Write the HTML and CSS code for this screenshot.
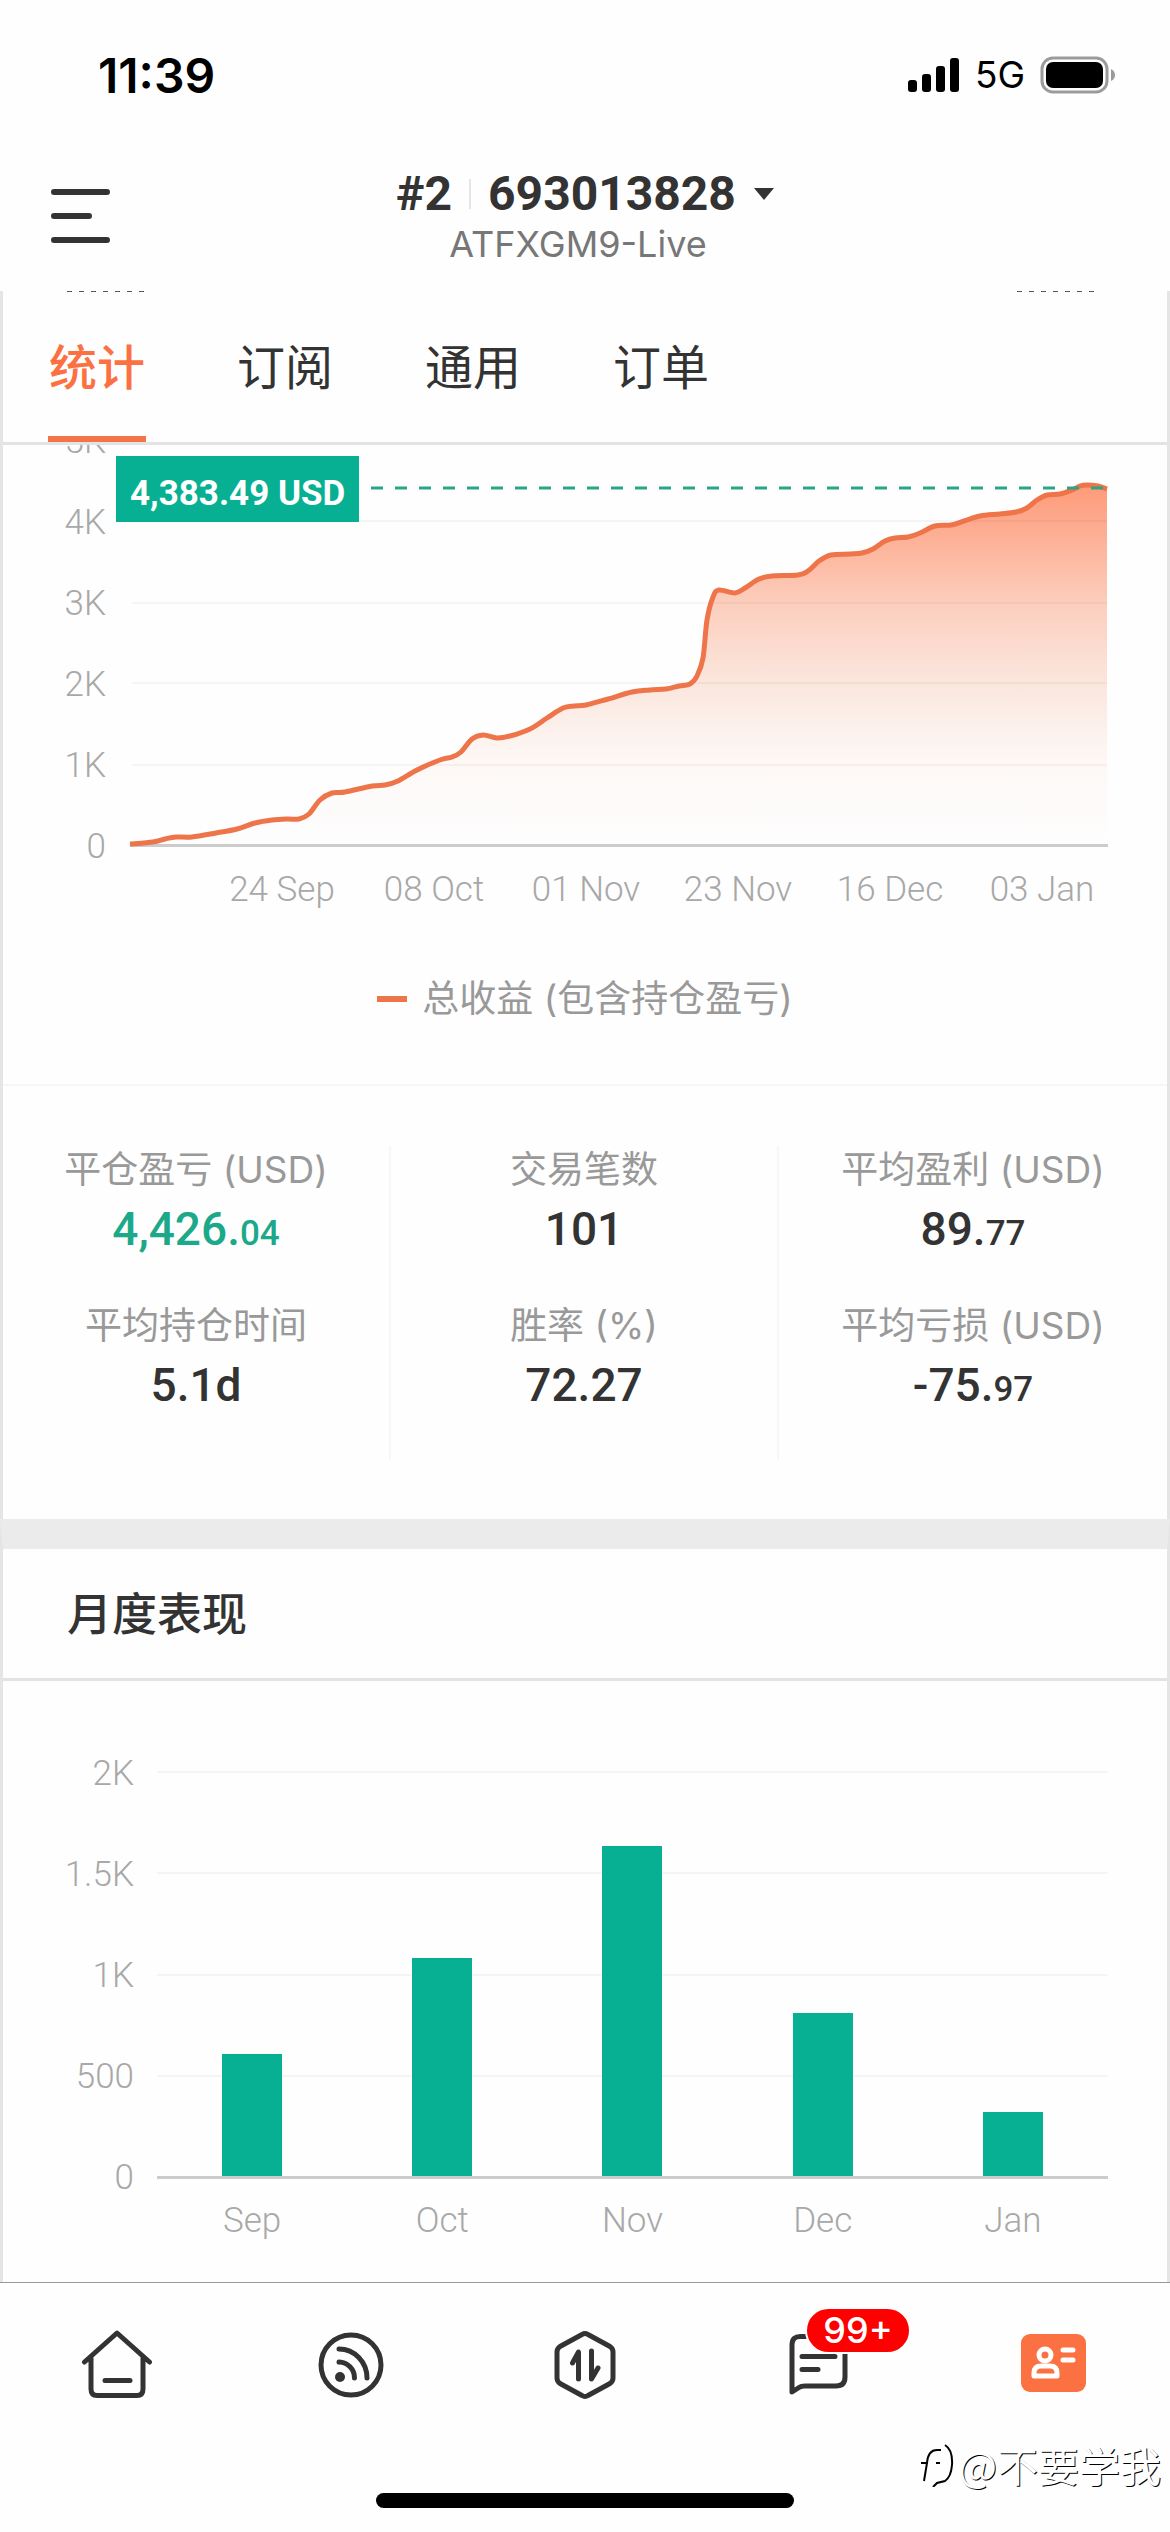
FILE: index.html
```html
<!DOCTYPE html>
<html lang="zh-CN">
<head>
<meta charset="utf-8">
<meta name="viewport" content="width=device-width, initial-scale=1">
<title>ATFXGM9-Live</title>
<link rel="stylesheet" href="styles.css">
</head>
<body>
<div class="status">
  <span class="clock">11:39</span>
  <div class="status-right">
    <svg class="signal" width="52" height="36" viewBox="0 0 52 36"><rect x="0" y="23" width="9" height="12" rx="3"/><rect x="14" y="17" width="9" height="18" rx="3"/><rect x="28" y="9" width="9" height="26" rx="3"/><rect x="42" y="1" width="9" height="34" rx="3"/></svg>
    <span class="network">5G</span>
    <svg class="battery" width="76" height="38" viewBox="0 0 76 38"><rect x="2" y="2" width="65" height="34" rx="11" fill="none" stroke="#9b9b9b" stroke-width="3"/><rect x="6" y="6" width="57" height="26" rx="7"/><path d="M71 13q4 2 4 6t-4 6z" fill="#9b9b9b"/></svg>
  </div>
</div>
<header class="header">
  <button class="menu" aria-label="菜单"><svg width="62" height="56" viewBox="0 0 62 56" stroke="#333" stroke-width="6" stroke-linecap="round"><path d="M4 4H57M4 28H39M4 52H57"/></svg></button>
  <button class="account">
    <span class="account-top"><span>#2</span><i class="bar"></i><span>693013828</span><svg class="caret" width="20" height="12" viewBox="0 0 20 12"><path d="M0 0H20L10 12z" fill="#333"/></svg></span>
    <span class="server">ATFXGM9-Live</span>
  </button>
</header>
<main class="content">
  <div class="scrolled-edge"><i></i><i></i></div>
  <nav class="tabs">
    <a class="tab active" href="#stats">统计</a>
    <a class="tab" href="#subscribe">订阅</a>
    <a class="tab" href="#general">通用</a>
    <a class="tab" href="#orders">订单</a>
  </nav>
  <section class="profit" id="stats">
    <div class="profit-chart">
      <div class="y-axis"><span>5K</span><span>4K</span><span>3K</span><span>2K</span><span>1K</span><span>0</span></div>
      <svg class="profit-plot" viewBox="130 40 978 408" preserveAspectRatio="none">
        <defs><linearGradient id="fade" gradientUnits="userSpaceOnUse" x1="0" y1="85" x2="0" y2="445">
          <stop offset="0" stop-color="#fe9b79"/><stop offset=".12" stop-color="#fdac91"/><stop offset=".33" stop-color="#fccebd"/><stop offset=".55" stop-color="#fbe6dd"/><stop offset=".77" stop-color="#fdf8f6"/><stop offset="1" stop-color="#fefefe"/>
        </linearGradient></defs>
        <path id="area" fill="url(#fade)"/>
        <path d="M132 121H1107M132 203H1107M132 283H1107M132 365H1107" stroke="#000" stroke-opacity=".035" stroke-width="2"/>
        <path d="M130 445.500H1108" stroke="#ccc" stroke-width="3"/>
        <path id="line" fill="none" stroke="#ee7449" stroke-width="5" stroke-linejoin="round"/>
        <path d="M371 88H1107" stroke="#2ba487" stroke-width="3" stroke-dasharray="12 12"/>
      </svg>
      <div class="tooltip">4,383.49 USD</div>
    </div>
    <div class="dates"><span>24 Sep</span><span>08 Oct</span><span>01 Nov</span><span>23 Nov</span><span>16 Dec</span><span>03 Jan</span></div>
    <div class="legend"><i></i>总收益 (包含持仓盈亏)</div>
  </section>
  <section class="stats">
    <div class="stat-col">
      <div class="stat"><span class="label">平仓盈亏 (USD)</span><span class="value gain">4,426.<small>04</small></span></div>
      <div class="stat"><span class="label">平均持仓时间</span><span class="value">5.1d</span></div>
    </div>
    <div class="stat-col">
      <div class="stat"><span class="label">交易笔数</span><span class="value">101</span></div>
      <div class="stat"><span class="label">胜率 (%)</span><span class="value">72.27</span></div>
    </div>
    <div class="stat-col">
      <div class="stat"><span class="label">平均盈利 (USD)</span><span class="value">89.<small>77</small></span></div>
      <div class="stat"><span class="label">平均亏损 (USD)</span><span class="value">-75.<small>97</small></span></div>
    </div>
  </section>
  <section class="monthly">
    <h2>月度表现</h2>
    <div class="month-chart">
      <div class="y-axis"><span>2K</span><span>1.5K</span><span>1K</span><span>500</span><span>0</span></div>
      <div class="bars">
        <div class="rules"><i></i><i></i><i></i><i></i></div>
        <div class="col" style="height:122px"></div>
        <div class="col" style="height:218px"></div>
        <div class="col" style="height:330px"></div>
        <div class="col" style="height:163px"></div>
        <div class="col" style="height:64px"></div>
      </div>
    </div>
    <div class="months"><span>Sep</span><span>Oct</span><span>Nov</span><span>Dec</span><span>Jan</span></div>
  </section>
</main>
<nav class="tabbar">
  <a href="#home" aria-label="首页"><svg width="72" height="72" viewBox="0 0 72 72"><path d="M3.500 33L36 4L68.500 33M10 29V60Q10 66.500 16 66.500H56Q62 66.500 62 60V29M24 51.500H49"/></svg></a>
  <a href="#signals" aria-label="信号"><svg width="72" height="72" viewBox="0 0 72 72"><ellipse cx="36" cy="36" rx="30" ry="30"/><path d="M24 20A28 29 0 0 1 52 49M24 33A16 16 0 0 1 39.500 49"/><circle cx="25" cy="48" r="5" class="dot"/></svg></a>
  <a href="#trade" aria-label="交易"><svg width="72" height="72" viewBox="0 0 72 72"><path d="M33 5.500Q36 3.500 39 5.500L61 17.500Q64 19.500 64 23V49Q64 52.500 61 54.500L39 66.500Q36 68.500 33 66.500L11 54.500Q8 52.500 8 49V23Q8 19.500 11 17.500ZM23.500 34L29.500 23V50M42.500 22V50L49 39"/></svg></a>
  <a class="messages" href="#messages" aria-label="消息"><svg width="72" height="72" viewBox="0 0 72 72"><path d="M18 7.500Q9 7 9 16V63L16 58.500Q18 57 22 57H53Q62 57 62 48V16Q62 7.500 53 7.500ZM19 27.500H52M19 40.500H35"/></svg><b class="badge">99+</b></a>
  <a href="#me" aria-label="账户"><svg width="72" height="72" viewBox="0 0 72 72"><rect x="4" y="5" width="65" height="58" rx="9" fill="#fc7141" stroke="none"/><g stroke="#fff"><circle cx="28" cy="26" r="6"/><path d="M17 47V44Q17 37 24 37H33Q40 37 40 44V47Z"/><path d="M46 21H56M46 31H56"/></g></svg></a>
</nav>
<footer class="home-area"><i class="home-indicator"></i></footer>
<div class="watermark"><svg width="38" height="46" viewBox="0 0 38 46" fill="none" stroke="#000" stroke-width="2"><path d="M6 40L9 22H3M9 22Q10 9 19 9H23M18 22H22M27 4Q35 9 34 24Q33 36 27 40L19 42L15 46"/></svg><span>@不要学我</span></div>
<script src="chart.js"></script>
</body>
</html>
```
FILE: styles.css
```css
* { box-sizing: border-box; }
body { margin: 0; background: #fefefe; color: #333; font-family: Inter, "Noto Sans CJK SC", sans-serif; font-size: 36px; position: relative; }
button { border: 0; padding: 0; background: none; color: inherit; font: inherit; }
a { color: inherit; text-decoration: none; }
svg { display: block; }
.status { height: 150px; padding: 0 54px 0 98px; display: flex; justify-content: space-between; align-items: center; color: #000; }
.clock { font-size: 48px; font-weight: 600; }
.status-right { display: flex; align-items: center; gap: 15px; }
.network { font-size: 37px; line-height: 40px; }
.header { height: 141px; display: grid; grid-template-columns: 1fr auto 1fr; align-items: start; }
.menu { margin: 38px 0 0 50px; justify-self: start; }
.account { display: flex; flex-direction: column; align-items: center; padding-top: 15px; }
.account-top { display: flex; align-items: center; font: 700 48px/58px Roboto, sans-serif; }
.bar { width: 2px; height: 30px; margin: 0 17px; background: #e5e5e5; }
.caret { margin-left: 18px; }
.server { line-height: 42px; color: #777; margin-right: 14px; }
.content { border: solid #e5e5e5; border-width: 0 3px; }
.scrolled-edge { height: 1px; padding: 0 70px 0 64px; display: flex; justify-content: space-between; }
.scrolled-edge i { width: 80px; height: 1px; background: repeating-linear-gradient(90deg, #555 0 5px, transparent 5px 12px); }
.tabs { height: 153px; display: flex; gap: 90px; padding-left: 45px; border-bottom: 3px solid #e3e3e3; }
.tab { display: block; padding: 0 1px; font-size: 48px; line-height: 152px; }
.tab.active { height: 150px; color: #fc7141; font-weight: 500; border-bottom: 6px solid #f4744a; }
.profit { overflow: hidden; height: 641px; border-bottom: 2px solid #f6f6f6; }
.y-axis { display: flex; flex-direction: column; text-align: right; padding-right: 24px; }
.y-axis, .dates, .months { font-family: Roboto, sans-serif; font-weight: 300; font-size: 35px; color: #a8a8a8; }
.profit-chart { display: grid; grid-template-columns: 127px 1fr; margin-top: -45px; padding-right: 59px; position: relative; }
.profit-chart .y-axis span { height: 81px; line-height: 84px; }
.profit-plot { width: 100%; height: 408px; margin-top: 40px; }
.tooltip { position: absolute; left: 113px; top: 56px; height: 66px; padding: 5px 14px 0; background: #07b092; color: #fff; font: 700 35px/66px Roboto, sans-serif; }
.dates { display: grid; grid-template-columns: repeat(6, 1fr); padding: 0 49px 0 203px; margin-top: -18px; line-height: 44px; text-align: center; }
.legend { display: flex; justify-content: center; align-items: center; gap: 15px; margin-top: 61px; color: #999; font-size: 37px; line-height: 52px; }
.legend i { width: 30px; height: 6px; background: #ee7449; }
.stats { display: grid; grid-template-columns: repeat(3, 1fr); padding: 60px 0; }
.stat-col { height: 313px; border-right: 2px solid #f7f7f7; text-align: center; }
.stat-col:last-child { border-right: 0; }
.stat { display: flex; flex-direction: column; height: 156px; }
.label { color: #999; font-size: 37px; line-height: 48px; }
.value { font: 500 46px/68px Roboto, sans-serif; margin-top: 1px; }
.value small { font-size: 35px; }
.gain { color: #1ba98a; }
.monthly { border-top: 30px solid #ebebeb; margin: 0 -3px; padding: 0; height: 763px; border-left: 3px solid #e5e5e5; border-right: 3px solid #e5e5e5; }
h2 { margin: 0; padding-left: 64px; height: 132px; font-size: 45px; line-height: 132px; font-weight: 500; border-bottom: 3px solid #e3e3e3; }
.month-chart { display: grid; grid-template-columns: 154px 1fr; margin-top: 41px; padding-right: 59px; }
.month-chart .y-axis { padding-right: 23px; }
.month-chart .y-axis span { height: 101px; line-height: 104px; }
.bars { position: relative; height: 408px; margin-top: 49px; display: flex; justify-content: space-around; align-items: flex-end; border-bottom: 3px solid #ccc; }
.rules { position: absolute; inset: 0; display: grid; grid-template-rows: repeat(4, 1fr); }
.rules i { border-top: 2px solid #f5f5f5; }
.col { width: 60px; background: #07b092; position: relative; }
.months { display: grid; grid-template-columns: repeat(5, 1fr); padding: 0 59px 0 154px; margin-top: -28px; line-height: 44px; text-align: center; }
.tabbar { border-top: 1px solid #999; display: grid; grid-template-columns: repeat(5, 1fr); justify-items: center; padding-top: 46px; height: 160px; }
.tabbar svg { fill: none; stroke: #333; stroke-width: 5; stroke-linecap: round; stroke-linejoin: round; }
.tabbar .dot { fill: #333; stroke: none; }
.messages { position: relative; }
.badge { position: absolute; left: 22px; top: -22px; width: 106px; height: 47px; border: 2px solid #fefefe; border-radius: 24px; background: #f00; color: #fff; font-size: 36px; font-weight: 500; line-height: 43px; text-align: center; }
.home-area { height: 90px; display: flex; justify-content: center; align-items: flex-start; padding-top: 51px; }
.home-indicator { width: 418px; height: 15px; border-radius: 8px; background: #000; }
.watermark { position: absolute; right: 9px; bottom: 38px; display: flex; align-items: center; gap: 2px; color: #fff; font: 41px/60px "Noto Sans CJK SC", sans-serif; text-shadow: 1px 1px 0 #000; }
```
FILE: chart.js
```js
// Profit curve: x along the plot, y downward, one pair per sample.
const samples = [
  [130,444],[153,442],[165,439],[176,437],[192,437],[216,433],[237,429],[255,423],[272,420],[287,419],[299,419],[309,414],[320,400],[332,393],[345,392],
  [372,386],[385,385],[398,381],[417,370],[440,360],[452,357],[461,352],[472,339],[483,335],[497,338],[510,336],[530,329],[547,318],[563,308],[574,306],
  [586,305],[608,299],[632,292],[650,290],[666,289],[679,286],[690,284],[697,276],[703,258],[707,220],[713,197],[719,190],[735,193],[745,188],[759,179],
  [772,176],[798,175],[808,171],[819,161],[831,155],[850,154],[862,153],[873,149],[885,141],[895,138],[908,137],[920,133],[935,126],[951,125],[964,121],
  [980,116],[1000,114],[1016,112],[1027,108],[1037,100],[1047,95],[1060,94],[1072,90],[1080,86],[1087,85],[1098,86],[1107,89]
];
let d = 'M' + samples[0];
for (let i = 1; i < samples.length; i++) {
  const a = samples[i - 2] || samples[i - 1], b = samples[i - 1], c = samples[i], e = samples[i + 1] || c;
  d += `C${b[0] + (c[0] - a[0]) / 6},${b[1] + (c[1] - a[1]) / 6} ${c[0] - (e[0] - b[0]) / 6},${c[1] - (e[1] - b[1]) / 6} ${c}`;
}
document.getElementById('line').setAttribute('d', d);
document.getElementById('area').setAttribute('d', d + 'V445H130Z');
```
